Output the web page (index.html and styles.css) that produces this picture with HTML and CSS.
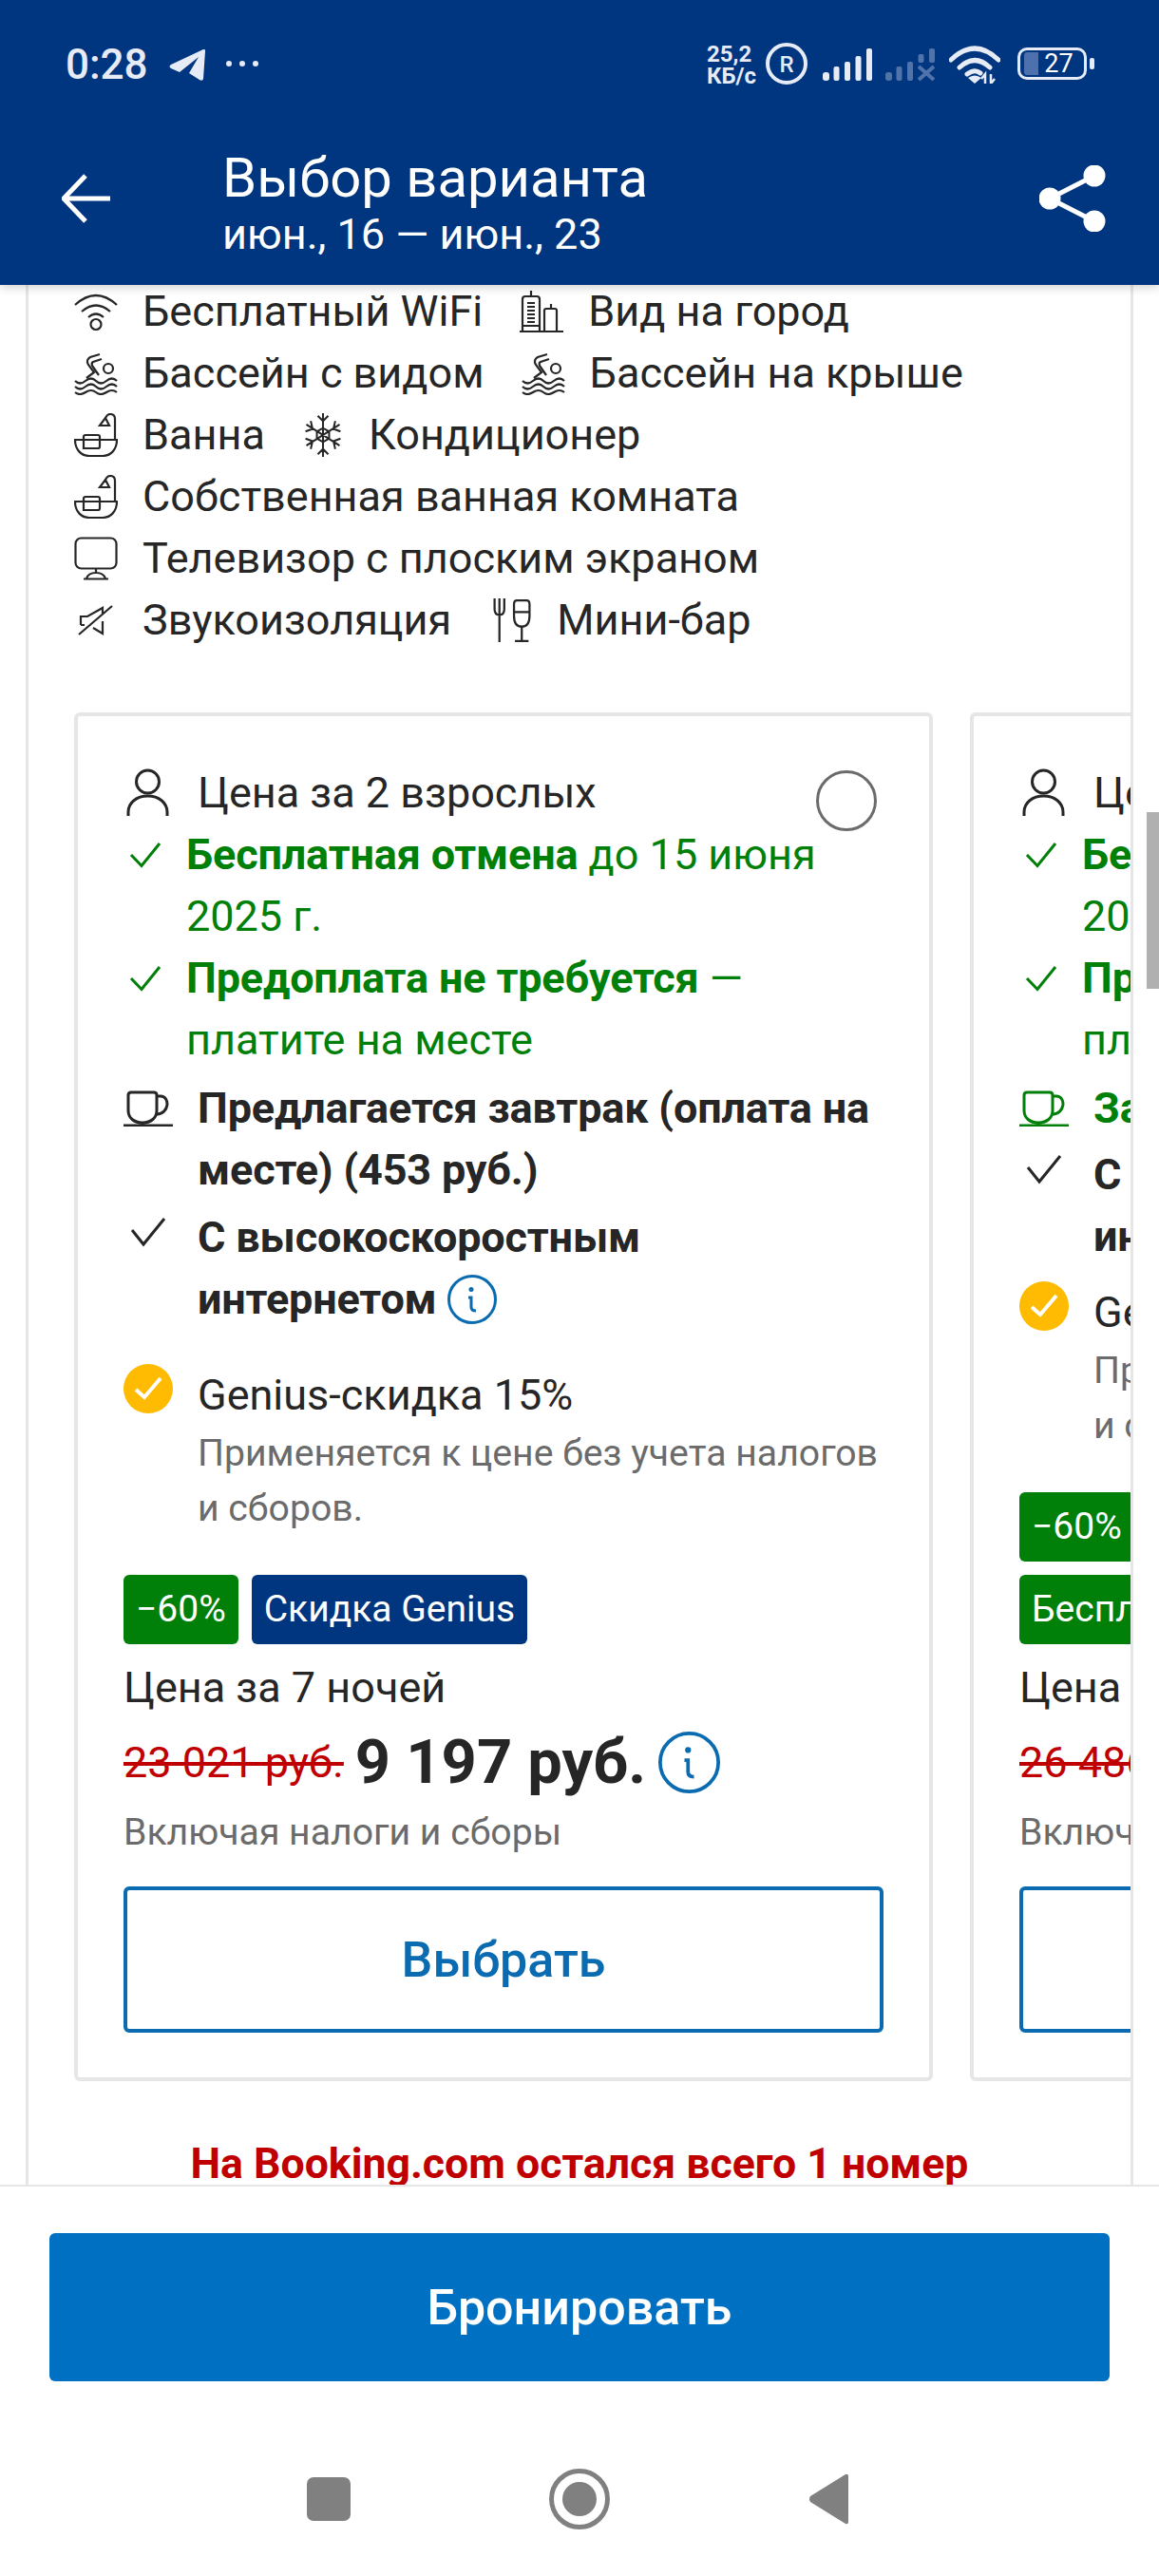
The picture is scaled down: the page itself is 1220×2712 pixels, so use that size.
FILE: index.html
```html
<!DOCTYPE html>
<html lang="ru">

<head>
    <meta charset="UTF-8">
    <meta name="viewport" content="width=device-width, initial-scale=1.0">
    <title>Выбор варианта</title>
    <link rel="stylesheet" href="styles.css">
</head>

<body>
    <svg class="sprite" aria-hidden="true">
        <symbol id="i-wifi" viewBox="0 0 46 40"><path d="M1 13Q23-7 45 13M8 20Q23 7 38 20M15 26Q23 19 31 26"/><circle cx="23" cy="33.500" r="5.500"/></symbol>
        <symbol id="i-city" viewBox="0 0 46 44"><path d="M12 0V5M3 42V9Q3 6 6 6H18Q21 6 21 9V42M8 13H16M8 17H16M8 21H16M8 25H16M8 29H16M8 33H16M21 37H3M26 42V21Q26 19 28 19H37Q39 19 39 21V42M33 14V19M0 43H46"/></symbol>
        <symbol id="i-swim" viewBox="0 0 46 44"><path d="M27 2L17 5Q12 8 15 13L21 21L13 27M29 7L20 10Q18 11 19 14L26 24"/><circle cx="36" cy="17" r="5"/><path d="M1 30Q6 35 12 30T23 30T34 30T45 30M1 36Q6 41 12 36T23 36T34 36T45 36M1 42Q6 46 12 42T23 42T34 42T45 42"/></symbol>
        <symbol id="i-bath" viewBox="0 0 46 46"><path d="M1 28H45C45 39 38 45 30 45H16C8 45 1 39 1 28ZM10 37V25Q10 23 12 23H25Q27 23 27 25V35Q27 37 25 37ZM43 27V6Q43 1 38 1Q35 1 33 5L27 13H37L33 5"/></symbol>
        <symbol id="i-snow" viewBox="0 0 42 50"><path d="M21 0V50M2 13L40 37M40 13L2 37M15 3L21 9L27 3M15 47L21 41L27 47M1 21L9 18L7 9M41 29L33 32L35 41M41 21L33 18L35 9M1 29L9 32L7 41M21 17L14 21V29L21 33L28 29V21Z"/></symbol>
        <symbol id="i-tv" viewBox="0 0 46 46"><rect x="1.500" y="1.500" width="43" height="32" rx="6"/><path d="M23 34V38M10 44.500H36M13 44Q15 38 23 38Q31 38 33 44"/></symbol>
        <symbol id="i-mute" viewBox="0 0 37 32"><path d="M1 31L36 1M3 21V12H10L26 3V9M7 21H3M26 17V30L16 24"/></symbol>
        <symbol id="i-bar" viewBox="0 0 40 45"><path d="M2 0V11Q2 17 7 17Q12 17 12 11V0M7 0V45M22 6Q22 2 25 2H35Q38 2 38 6V18Q38 29 30 29Q22 29 22 18ZM22 14H38M30 29V44M23 44H37"/></symbol>
        <symbol id="i-person" viewBox="0 0 45 52"><circle cx="22.500" cy="14" r="12"/><path d="M2 50V46C2 36 11 29 22.500 29S43 36 43 46V50"/></symbol>
        <symbol id="i-check" viewBox="0 0 34 28"><path d="M2 14L13 25.500L32 2"/></symbol>
        <symbol id="i-cup" viewBox="0 0 52 38"><path d="M5 21V5Q5 2 8 2H32Q35 2 35 5V21C35 29 29 34 20 34S5 29 5 21ZM35 6H39C49 6 49 25 34 25M0 37H52"/></symbol>
        <symbol id="i-tick" viewBox="0 0 38 32"><path d="M2 14L14 29L36 2"/></symbol>
        <symbol id="i-genius" viewBox="0 0 52 52"><circle cx="26" cy="26" r="26" fill="#febb02" stroke="none"/><path d="M13 27L22 35L39 15" stroke="#fff" stroke-width="4"/></symbol>
        <symbol id="i-info" viewBox="0 0 52 52"><circle cx="26" cy="26" r="24.500"/><circle cx="25" cy="15.500" r="2.500" fill="currentColor" stroke="none"/><path d="M22 24H25V34Q25 38 30 38"/></symbol>
    </svg>

    <header class="top">
        <div class="status">
            <span class="time">0:28</span>
            <svg class="tg" viewBox="0 0 38 33"><path d="M36 0Q38-1 38 2L36 31Q35 34 32 32L21 25L31 8L11 24L2 20Q-1 18 2 16Z"/></svg>
            <svg class="dots" viewBox="0 0 34 6"><circle cx="3" cy="3" r="3"/><circle cx="17" cy="3" r="3"/><circle cx="31" cy="3" r="3"/></svg>
            <div class="status-right">
                <span class="speed">25,2<br>КБ/с</span>
                <svg class="roam" viewBox="0 0 44 44"><circle cx="22" cy="22" r="20"/><text x="22" y="30.500" text-anchor="middle">R</text></svg>
                <svg class="signal" viewBox="0 0 52 34"><rect y="25" width="7" height="9" rx="3"/><rect x="11.500" y="19" width="6" height="15" rx="2"/><rect x="23" y="14" width="6" height="20" rx="2"/><rect x="34.500" y="8" width="6" height="26" rx="2"/><rect x="46" y="0" width="6" height="34" rx="2"/></svg>
                <svg class="signal signal-off" viewBox="0 0 52 34"><rect y="25" width="7" height="9" rx="3"/><rect x="11.500" y="19" width="6" height="15" rx="2"/><rect x="23" y="14" width="6" height="20" rx="2"/><rect x="34.500" y="6" width="6" height="9" rx="2"/><rect x="46" y="0" width="6" height="15" rx="2"/><path d="M35 19L51 33M51 19L35 33" fill="none" stroke="#e6ebf5" stroke-width="4"/></svg>
                <svg class="wifi" viewBox="0 0 54 40"><path d="M2 15Q27-9 52 15M11 23Q27 8 43 23M19 30Q27 24 33 29" fill="none" stroke="#e6ebf5" stroke-width="5" stroke-linecap="round"/><path d="M27 40L20 34Q27 29 34 34Z"/><path d="M38 40V30L34 35M44 30V40L48 35" fill="none" stroke="#e6ebf5" stroke-width="2.500"/></svg>
                <div class="battery">
                    <span class="battery-fill"></span>
                    <span class="battery-num">27</span>
                </div>
                <span class="battery-nub"></span>
            </div>
        </div>
        <div class="appbar">
            <svg class="back" viewBox="0 0 52 52"><path d="M51 26H3M25 2L2 26L25 50"/></svg>
            <div class="appbar-title">
                <div class="title">Выбор варианта</div>
                <div class="dates">июн., 16 — июн., 23</div>
            </div>
            <svg class="share" viewBox="0 0 70 70"><path d="M58 11L11 35L58 59"/><circle cx="58" cy="11" r="11.500"/><circle cx="11" cy="35" r="11.500"/><circle cx="58" cy="59" r="11.500"/></svg>
        </div>
    </header>

    <main class="scroll">
        <section class="room">
            <div class="facilities">
                <div class="fac-line">
                    <span class="fac"><svg class="ic ic-46"><use href="#i-wifi"/></svg>Бесплатный WiFi</span>
                    <span class="fac"><svg class="ic ic-46"><use href="#i-city"/></svg>Вид на город</span>
                </div>
                <div class="fac-line">
                    <span class="fac"><svg class="ic ic-46"><use href="#i-swim"/></svg>Бассейн с видом</span>
                    <span class="fac"><svg class="ic ic-46"><use href="#i-swim"/></svg>Бассейн на крыше</span>
                </div>
                <div class="fac-line">
                    <span class="fac"><svg class="ic ic-46"><use href="#i-bath"/></svg>Ванна</span>
                    <span class="fac"><svg class="ic ic-snow"><use href="#i-snow"/></svg>Кондиционер</span>
                </div>
                <div class="fac-line">
                    <span class="fac"><svg class="ic ic-46"><use href="#i-bath"/></svg>Собственная ванная комната</span>
                </div>
                <div class="fac-line">
                    <span class="fac"><svg class="ic ic-46"><use href="#i-tv"/></svg>Телевизор с плоским экраном</span>
                </div>
                <div class="fac-line">
                    <span class="fac"><svg class="ic ic-mute"><use href="#i-mute"/></svg>Звукоизоляция</span>
                    <span class="fac"><svg class="ic ic-bar"><use href="#i-bar"/></svg>Мини-бар</span>
                </div>
            </div>

            <div class="cards">
                <article class="card">
                    <div class="row row-first">
                        <span class="row-ic"><svg class="ic-person"><use href="#i-person"/></svg></span>
                        <span>Цена за 2 взрослых</span>
                        <span class="radio"></span>
                    </div>
                    <div class="row green">
                        <span class="row-ic row-ic-green"><svg class="ic-check"><use href="#i-check"/></svg></span>
                        <span><b>Бесплатная отмена</b> до 15 июня<br>2025 г.</span>
                    </div>
                    <div class="row green">
                        <span class="row-ic row-ic-green"><svg class="ic-check"><use href="#i-check"/></svg></span>
                        <span><b>Предоплата не требуется</b> —<br>платите на месте</span>
                    </div>
                    <div class="row row-meal">
                        <span class="row-ic"><svg class="ic-cup"><use href="#i-cup"/></svg></span>
                        <b>Предлагается завтрак (оплата на<br>месте) (453 руб.)</b>
                    </div>
                    <div class="row row-net">
                        <span class="row-ic"><svg class="ic-tick"><use href="#i-tick"/></svg></span>
                        <span><b>С высокоскоростным<br>интернетом</b> <svg class="ic-info"><use href="#i-info"/></svg></span>
                    </div>
                    <div class="row row-genius">
                        <span class="row-ic"><svg class="ic-genius"><use href="#i-genius"/></svg></span>
                        <div>
                            Genius-скидка 15%
                            <p class="note">Применяется к цене без учета налогов<br>и сборов.</p>
                        </div>
                    </div>
                    <div class="tags">
                        <span class="tag">−60%</span>
                        <span class="tag tag-blue">Скидка Genius</span>
                    </div>
                    <div class="nights">Цена за 7 ночей</div>
                    <div class="price-row">
                        <s class="old-price">23 021 руб.</s>
                        <span class="price">9 197 руб.</span>
                        <svg class="ic-info ic-info-big"><use href="#i-info"/></svg>
                    </div>
                    <div class="taxes">Включая налоги и сборы</div>
                    <button class="pick">Выбрать</button>
                </article>

                <article class="card">
                    <div class="row row-first">
                        <span class="row-ic"><svg class="ic-person"><use href="#i-person"/></svg></span>
                        <span>Цена за 2 взрослых</span>
                        <span class="radio"></span>
                    </div>
                    <div class="row green">
                        <span class="row-ic row-ic-green"><svg class="ic-check"><use href="#i-check"/></svg></span>
                        <span><b>Бесплатная отмена</b> до 15 июня<br>2025 г.</span>
                    </div>
                    <div class="row green">
                        <span class="row-ic row-ic-green"><svg class="ic-check"><use href="#i-check"/></svg></span>
                        <span><b>Предоплата не требуется</b> —<br>платите на месте</span>
                    </div>
                    <div class="row row-meal green">
                        <span class="row-ic"><svg class="ic-cup"><use href="#i-cup"/></svg></span>
                        <b>Завтрак включен</b>
                    </div>
                    <div class="row row-net2">
                        <span class="row-ic"><svg class="ic-tick"><use href="#i-tick"/></svg></span>
                        <b>С высокоскоростным<br>интернетом</b>
                    </div>
                    <div class="row row-genius2">
                        <span class="row-ic"><svg class="ic-genius"><use href="#i-genius"/></svg></span>
                        <div>
                            Genius-скидка 15%
                            <p class="note">Применяется к цене без учета налогов<br>и сборов.</p>
                        </div>
                    </div>
                    <div class="tags">
                        <span class="tag">−60%</span>
                        <span class="tag tag-wide">Бесплатная отмена</span>
                    </div>
                    <div class="nights">Цена за 7 ночей</div>
                    <div class="price-row">
                        <s class="old-price">26 486 руб.</s>
                        <span class="price">10 594 руб.</span>
                    </div>
                    <div class="taxes">Включая налоги и сборы</div>
                    <button class="pick">Выбрать</button>
                </article>
            </div>

            <p class="left-msg">На Booking.com остался всего 1 номер</p>
        </section>
        <div class="scrollbar"></div>
    </main>

    <footer class="bottom">
        <button class="book">Бронировать</button>
        <nav class="sysnav">
            <span class="nav-square"></span>
            <svg class="nav-home" viewBox="0 0 64 64"><circle cx="32" cy="32" r="29.500" fill="none" stroke="#808080" stroke-width="5"/><circle cx="32" cy="32" r="18"/></svg>
            <svg class="nav-back" viewBox="0 0 42 54"><path d="M39 1Q42 0 42 3V51Q42 54 39 53L2 30Q0 27 2 24Z"/></svg>
        </nav>
    </footer>
</body>

</html>
```

FILE: styles.css
```css
* {
    box-sizing: border-box;
}

body {
    margin: 0;
    width: 1220px;
    height: 2712px;
    display: flex;
    flex-direction: column;
    overflow: hidden;
    background-color: #fff;
    color: #262626;
    font-family: Roboto, "Noto Sans", sans-serif;
    font-size: 45px;
    line-height: 65px;
}

b {
    letter-spacing: -0.17px;
}

.sprite {
    display: none;
}

/* header */

.top {
    flex: none;
    height: 300px;
    background-color: #003580;
    color: #fff;
    box-shadow: 0 2px 10px rgba(0, 0, 0, 0.2);
    position: relative;
    z-index: 2;
}

.status {
    height: 110px;
    padding: 45px 68px 0 69px;
    display: flex;
    align-items: flex-start;
    color: #e6ebf5;
    fill: #e6ebf5;
}

.time {
    font-size: 44px;
    line-height: 46px;
    width: 85px;
    font-weight: 500;
}

.tg {
    width: 38px;
    height: 33px;
    margin: 7px 0 0 24px;
}

.dots {
    width: 34px;
    height: 6px;
    margin: 19px 0 0 22px;
}

.status-right {
    margin-left: auto;
    display: flex;
    align-items: flex-start;
}

.speed {
    width: 49px;
    margin: 1px 13px 0 0;
    font-size: 24px;
    line-height: 23px;
    font-weight: 700;
    white-space: nowrap;
}

.roam {
    width: 44px;
    height: 44px;
    margin-right: 16px;
}

.roam circle {
    fill: none;
    stroke: #e6ebf5;
    stroke-width: 4px;
}

.roam text {
    font-size: 24px;
    font-weight: 500;
}

.signal {
    width: 52px;
    height: 34px;
    margin: 6px 14px 0 0;
}

.signal-off {
    opacity: 0.35;
    margin-right: 15px;
}

.wifi {
    width: 54px;
    height: 40px;
    margin: 3px 18px 0 0;
}

.battery {
    width: 73px;
    height: 34px;
    margin-top: 5px;
    border: 3px solid #e6ebf5;
    border-radius: 10px;
    position: relative;
    display: flex;
    align-items: center;
    justify-content: center;
    padding-left: 14px;
    color: #fff;
    font-size: 27px;
    line-height: 27px;
}

.battery-fill {
    position: absolute;
    left: 4px;
    top: 2px;
    bottom: 2px;
    width: 15px;
    background-color: #4c71ac;
    border-radius: 3px 0 0 3px;
}

.battery-num {
    position: relative;
}

.battery-nub {
    width: 5px;
    height: 12px;
    margin: 16px 0 0 3px;
    background-color: #e6ebf5;
    border-radius: 2px;
}

.appbar {
    height: 190px;
    padding-left: 65px;
    display: flex;
    align-items: flex-start;
}

.back {
    width: 52px;
    height: 52px;
    margin-top: 73px;
    fill: none;
    stroke: #fff;
    stroke-width: 5px;
}

.appbar-title {
    margin: 47px 0 0 117px;
}

.title {
    font-size: 58px;
    line-height: 60px;
}

.dates {
    font-size: 45px;
    line-height: 60px;
}

.share {
    width: 70px;
    height: 70px;
    margin: 64px 56px 0 auto;
    fill: #fff;
    stroke: #fff;
    stroke-width: 5px;
}

.share path {
    fill: none;
}

.share circle {
    stroke: none;
}

/* scrolled content */

.scroll {
    flex: 1;
    min-height: 0;
    overflow: hidden;
    position: relative;
}

.room {
    width: 1166px;
    margin-left: 27px;
    border-left: 3px solid #e6e6e6;
    border-right: 3px solid #e6e6e6;
    min-height: 2100px;
}

.facilities {
    margin-top: -5px;
    padding-left: 48px;
}

.fac-line {
    display: flex;
    gap: 39px;
    height: 65px;
}

.fac {
    display: flex;
    align-items: center;
    white-space: nowrap;
}

.ic {
    flex: none;
    fill: none;
    stroke: #262626;
    stroke-width: 2.2px;
    margin-right: 26px;
}

.ic-46 {
    width: 46px;
    height: 46px;
}

.ic-snow {
    width: 44px;
    height: 46px;
}

.ic-mute {
    width: 37px;
    height: 34px;
    margin: 0 31px 0 4px;
}

.ic-bar {
    width: 42px;
    height: 46px;
    margin-left: 4px;
}

.cards {
    display: flex;
    gap: 39px;
    margin-top: 65px;
    padding-left: 48px;
    overflow: hidden;
}

.card {
    flex: none;
    display: flex;
    flex-direction: column;
    width: 904px;
    padding: 48px 48px 47px;
    border: 4px solid #e6e6e6;
    border-radius: 6px;
}

.row {
    display: flex;
}

.row-first {
    height: 65px;
}

.row-ic {
    flex: none;
    width: 78px;
    height: 65px;
    display: flex;
    align-items: center;
    fill: none;
    stroke: #262626;
    stroke-width: 3px;
}

.row-ic-green {
    width: 66px;
    padding-left: 6px;
}

.green {
    color: #008009;
}

.green .row-ic {
    stroke: #008009;
}

.ic-person {
    width: 45px;
    height: 52px;
    margin-left: 3px;
}

.ic-check {
    width: 34px;
    height: 28px;
}

.ic-cup {
    width: 52px;
    height: 38px;
}

.ic-tick {
    width: 38px;
    height: 32px;
    margin: 0 0 12px 7px;
}

.ic-genius {
    width: 52px;
    height: 52px;
    margin-bottom: 13px;
}

.ic-info {
    width: 52px;
    height: 52px;
    vertical-align: middle;
    margin-top: -6px;
    fill: none;
    stroke: #0a6bb0;
    color: #0a6bb0;
    stroke-width: 3px;
}

.radio {
    flex: none;
    width: 64px;
    height: 64px;
    margin: 9px 7px 0 auto;
    border: 3px solid #6b6b6b;
    border-radius: 50%;
}

.row-meal {
    margin-top: 7px;
}

.row-net {
    margin-top: 6px;
}

.row-net2 {
    margin-top: 5px;
}

.row-genius {
    margin-top: 36px;
}

.row-genius2 {
    margin-top: 15px;
}

.note {
    margin: 0;
    color: #6b6b6b;
    font-size: 39.200px;
    line-height: 58px;
}

.tags {
    display: flex;
    flex-wrap: wrap;
    gap: 14px;
    margin-top: 41px;
}

.tag {
    height: 73px;
    padding: 0 13px;
    background-color: #008009;
    color: #fff;
    font-size: 39px;
    line-height: 73px;
    border-radius: 6px;
    white-space: nowrap;
}

.tag-blue {
    background-color: #003580;
}

.tag-wide {
    width: 700px;
}

.nights {
    margin-top: 13px;
}

.price-row {
    height: 84px;
    margin-top: 4px;
    display: flex;
    align-items: center;
}

.old-price {
    color: #c00000;
    font-size: 45px;
    white-space: nowrap;
}

.price {
    margin-left: 12px;
    font-size: 65px;
    font-weight: 700;
    white-space: nowrap;
}

.ic-info-big {
    width: 65px;
    height: 65px;
    margin: 0 0 0 13px;
}

.taxes {
    margin-top: 3px;
    color: #6b6b6b;
    font-size: 39.200px;
    line-height: 58px;
}

.pick {
    display: block;
    width: 800px;
    height: 154px;
    margin-top: 28px;
    background-color: #fff;
    border: 4px solid #0a6bb0;
    border-radius: 6px;
    color: #0a6bb0;
    font-family: inherit;
    font-size: 52px;
    font-weight: 500;
}

.left-msg {
    margin: 55px 0 0;
    color: #c00000;
    font-size: 44.600px;
    font-weight: 700;
    text-align: center;
}

.scrollbar {
    position: absolute;
    right: 0;
    top: 555px;
    width: 13px;
    height: 186px;
    background-color: #b0b0b0;
}

/* footer */

.bottom {
    flex: none;
    height: 412px;
    padding: 49px 52px 0;
    background-color: #fff;
    border-top: 2px solid #e6e6e6;
    position: relative;
    z-index: 2;
}

.book {
    display: block;
    width: 100%;
    height: 156px;
    background-color: #0071c2;
    border: none;
    border-radius: 6px;
    color: #fff;
    font-family: inherit;
    font-size: 52px;
    font-weight: 500;
}

.sysnav {
    margin-top: 92px;
    padding-left: 271px;
    display: flex;
    align-items: center;
    gap: 209px;
    fill: #808080;
}

.nav-square {
    width: 46px;
    height: 46px;
    background-color: #808080;
    border-radius: 7px;
}

.nav-home {
    width: 64px;
    height: 64px;
}

.nav-back {
    width: 42px;
    height: 54px;
}
```
